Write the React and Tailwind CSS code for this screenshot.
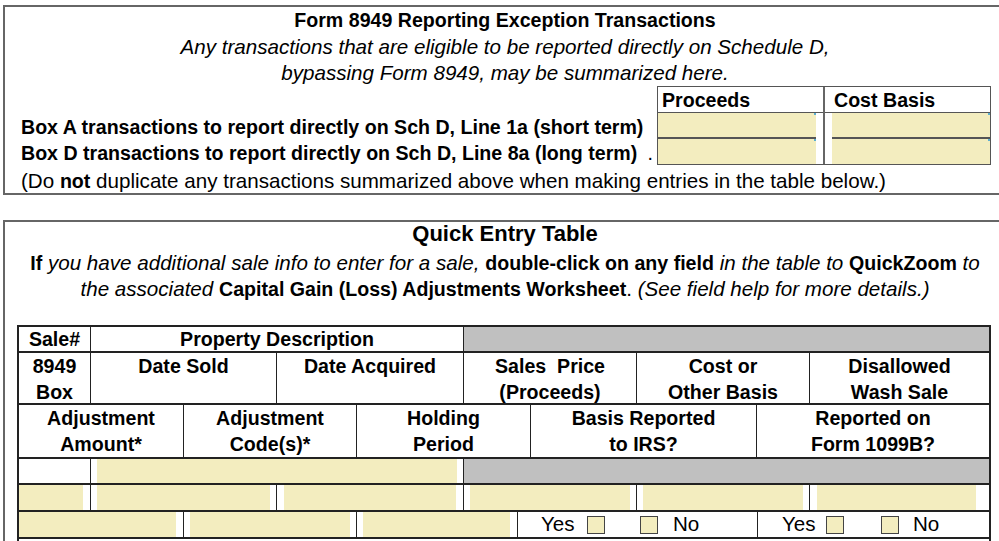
import React from 'react';

const yellow = 'h-full bg-[#f3edbf]';

function Check() {
  return <span className="block w-[18px] h-[18px] shrink-0 border border-[#444] bg-[#f3edbf]" />;
}

function B({ children }) {
  return <b className="font-bold text-[19.6px]">{children}</b>;
}

// yellow entry field with the little help marker in its corner
function Field({ line }) {
  return (
    <div className={`relative h-full bg-[#f3edbf] ${line ? 'border-b-2 border-[#555]' : ''}`}>
      <span className="absolute right-0 top-0 w-[2px] h-[2px] bg-[#5aaed0]" />
    </div>
  );
}

function ExceptionBox() {
  return (
    <div className="w-[1004px] border-2 border-[#666] text-[20.6px] text-black">
      <div className="h-[27px] leading-[27px] text-center font-bold text-[19.6px]">Form 8949 Reporting Exception Transactions</div>
      <div className="h-[26px] leading-[26px] text-center italic">Any transactions that are eligible to be reported directly on Schedule D,</div>
      <div className="h-[26px] leading-[26px] text-center italic">bypassing Form 8949, may be summarized here.</div>

      <div className="flex">
        <div className="w-[652px] pl-[16px] pr-[4px] font-bold text-[19.6px]">
          <div className="h-[28px]" />
          <div className="h-[26px] leading-[26px] whitespace-nowrap">Box A transactions to report directly on Sch D, Line 1a (short term)</div>
          <div className="h-[24px] leading-[26px] flex justify-between whitespace-nowrap">
            <span>Box D transactions to report directly on Sch D, Line 8a (long term)</span>
            <span className="font-normal">.</span>
          </div>
        </div>
        <div className="w-[334px] flex border border-[#555] text-[19.6px]">
          <div className="w-[167px] border-r-2 border-[#666]">
            <div className="h-[26px] leading-[26px] pl-[4px] font-bold border-b border-[#555]">Proceeds</div>
            <div className="h-[26px] pr-[7px]"><Field line /></div>
            <div className="h-[25px] pr-[7px]"><Field /></div>
          </div>
          <div className="flex-1">
            <div className="h-[26px] leading-[26px] pl-[9px] font-bold border-b border-[#555]">Cost Basis</div>
            <div className="h-[26px] pl-[7px]"><Field line /></div>
            <div className="h-[25px] pl-[7px]"><Field /></div>
          </div>
        </div>
      </div>

      <div className="h-[28px] pt-[4px] leading-[24px] pl-[16px] whitespace-nowrap">
        (Do <B>not</B> duplicate any transactions summarized above when making entries in the table below.)
      </div>
    </div>
  );
}

function QuickEntry() {
  return (
    <div className="mt-[25px] w-[1004px] border-2 border-[#666] text-[20.6px] text-black pb-[2px]">
      <div className="h-[24px] leading-[24px] text-center font-bold text-[22px]">Quick Entry Table</div>
      <div className="mt-[4px] text-center leading-[26px] whitespace-nowrap">
        <B>If</B> <i>you have additional sale info to enter for a sale,</i> <B>double-click on any field</B> <i>in the table to</i> <B>QuickZoom</B> <i>to</i>
        <br />
        <i>the associated</i> <B>Capital Gain (Loss) Adjustments Worksheet</B>. <i>(See field help for more details.)</i>
      </div>

      <div className="mt-[23px] ml-[12px] w-[974px] border-2 border-b-0 border-[#222] font-bold text-[19.6px]">
        <div className="flex h-[26px] leading-[24px] border-b-2 border-[#222] text-center">
          <div className="w-[72px] border-r border-[#222]">Sale#</div>
          <div className="w-[373px] border-r border-[#222]">Property Description</div>
          <div className="flex-1 bg-[#c0c0c0]" />
        </div>

        <div className="flex h-[52px] leading-[26px] border-b-2 border-[#222] text-center">
          <div className="w-[72px] border-r border-[#222]">8949<br />Box</div>
          <div className="w-[186px] border-r border-[#222]">Date Sold</div>
          <div className="w-[187px] border-r border-[#222]">Date Acquired</div>
          <div className="w-[173px] border-r border-[#222] whitespace-pre">Sales  Price<br />(Proceeds)</div>
          <div className="w-[173px] border-r border-[#222]">Cost or<br />Other Basis</div>
          <div className="flex-1">Disallowed<br />Wash Sale</div>
        </div>

        <div className="flex h-[54px] leading-[26px] border-b-2 border-[#222] text-center">
          <div className="w-[165px] border-r border-[#222]">Adjustment<br />Amount*</div>
          <div className="w-[173px] border-r border-[#222]">Adjustment<br />Code(s)*</div>
          <div className="w-[174px] border-r border-[#222]">Holding<br />Period</div>
          <div className="w-[226px] border-r border-[#222]">Basis Reported<br />to IRS?</div>
          <div className="flex-1">Reported on<br />Form 1099B?</div>
        </div>

        <div className="flex h-[26px] border-b-2 border-[#222]">
          <div className="w-[72px] border-r border-[#222]" />
          <div className="w-[373px] border-r border-[#222] px-[6px]"><div className={yellow} /></div>
          <div className="flex-1 bg-[#c0c0c0]" />
        </div>

        <div className="flex h-[27px] border-b-2 border-[#222]">
          <div className="w-[72px] border-r border-[#222] pr-[7px]"><div className={yellow} /></div>
          <div className="w-[186px] border-r border-[#222] px-[6px]"><div className={yellow} /></div>
          <div className="w-[187px] border-r border-[#222] px-[7px]"><div className={yellow} /></div>
          <div className="w-[173px] border-r border-[#222] px-[6px]"><div className={yellow} /></div>
          <div className="w-[173px] border-r border-[#222] px-[6px]"><div className={yellow} /></div>
          <div className="flex-1 pl-[7px] pr-[13px]"><div className={yellow} /></div>
        </div>

        <div className="flex h-[27px] border-b-2 border-[#222] font-normal text-[20.6px]">
          <div className="w-[165px] border-r border-[#222] pr-[7px]"><div className={yellow} /></div>
          <div className="w-[173px] border-r border-[#222] px-[6px]"><div className={yellow} /></div>
          <div className="w-[161px] border-r border-[#222] pl-[6px] pr-[7px]"><div className={yellow} /></div>
          <div className="w-[240px] border-r border-[#222] pl-[23px] flex items-center">
            <span className="w-[46px]">Yes</span>
            <Check />
            <span className="ml-[35px]"><Check /></span>
            <span className="ml-[15px]">No</span>
          </div>
          <div className="flex-1 pl-[24px] flex items-center">
            <span className="w-[44px]">Yes</span>
            <Check />
            <span className="ml-[37px]"><Check /></span>
            <span className="ml-[14px]">No</span>
          </div>
        </div>
        <div className="h-[20px]" />
      </div>
    </div>
  );
}

export default function App() {
  return (
    <div className="w-[999px] h-[541px] overflow-hidden bg-white pl-[3px] pt-[5px] font-['Liberation_Sans',Arial,sans-serif]">
      <ExceptionBox />
      <QuickEntry />
    </div>
  );
}
